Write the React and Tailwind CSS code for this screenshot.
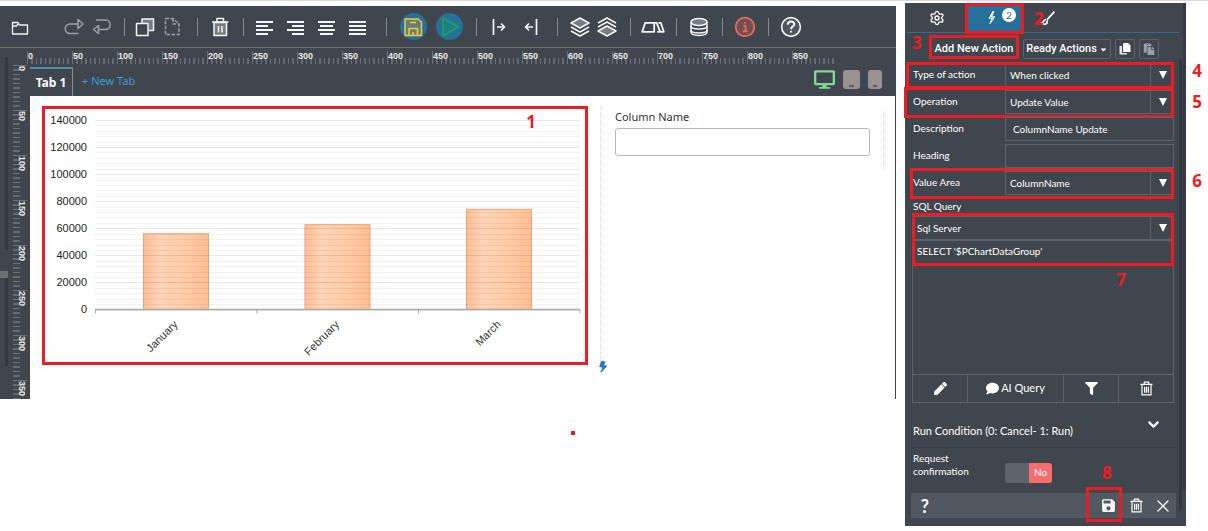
import React, { useState } from 'react';
import {
  FaDesktop,
  FaBolt,
  FaCaretDown,
  FaComment,
  FaFilter,
  FaPen,
  FaPaste
} from 'react-icons/fa';
import { MdSave } from 'react-icons/md';
import { Settings, X, ChevronDown } from 'lucide-react';

const Glyph = ({ size = 20, children, className = '' }) => (
  <svg
    width={size}
    height={size}
    viewBox="0 0 20 20"
    fill="none"
    stroke="currentColor"
    strokeWidth="1.5"
    strokeLinejoin="round"
    className={className}
  >
    {children}
  </svg>
);

// Toolbar drawings
const icons = {
  folder: <path d="M2.500 17V5.500h5.500l1.500 2.500h8v9zM2.500 9h4l1.500-2" strokeWidth="1.300" />,
  redo: <path d="M14.500 16.500H6a4.750 4.750 0 0 1 0-9.500h8M14 2.500v9l5-4.500z" />,
  undo: <path d="M4 3h9.500a4.750 4.750 0 0 1 0 9.500H6.500M6.500 8.500v8L1.500 12.500z" />,
  copy: (
    <>
      <path d="M7 6V2h11.500v11.500H14" fill="#777c82" />
      <path d="M1.500 6.500H13v12H1.500z" fill="#40464d" />
    </>
  ),
  page: <path d="M3.500 1.500H11l6 5.500v10.500H3.500zM11 1.500v5.500h6" strokeDasharray="3.500 1.500" />,
  trash: (
    <>
      <path d="M4 5.500h12.500v13H4z" fill="#777c82" />
      <path d="M2 5h16.500M7 4.500V1.500h6.500v3M8.500 9v6.500M12 9v6.500" />
    </>
  ),
  barIn: <path d="M4.500 2v16M8 10h7M12 6.500l3.500 3.500-3.500 3.500" strokeWidth="1.700" />,
  barOut: <path d="M15.500 2v16M12 10H5M8 6.500L4.500 10 8 13.500" strokeWidth="1.700" />,
  layers: (
    <>
      <path d="M10 1l9 5-9 5-9-5z" fill="#777c82" />
      <path d="M1 10l9 5 9-5M1 14l9 5 9-5" />
    </>
  ),
  layersUp: (
    <>
      <path d="M10 9l9 5-9 5-9-5z" fill="#777c82" />
      <path d="M1 10l9-5 9 5M1 6l9-5 9 5" />
    </>
  ),
  steps: <path d="M1 14L3.500 6.500H11V14zM11 6.500h2l3 7.500h-2.500M14.500 6.500h2L19 14h-3" />,
  database: (
    <>
      <path d="M2 5v10c0 4.500 16 4.500 16 0V5" />
      <path d="M2 9c0 4 16 4 16 0M2 13c0 4 16 4 16 0" />
      <ellipse cx="10" cy="5" rx="8" ry="3.500" fill="#777c82" />
    </>
  ),
  info: (
    <>
      <circle cx="10" cy="10" r="8.500" fill="#73504f" />
      <path d="M8.500 9h2v4.500M8 14h4.500M10 5.500v1.500" />
    </>
  ),
  help: (
    <>
      <circle cx="10" cy="10" r="8.500" fill="#51575e" />
      <path d="M7 8c0-4 6-4 6-.5 0 2-3 2-3 4.500M10 13.500v1.500" strokeWidth="1.800" />
    </>
  )
};

const alignLines = {
  left: [[1, 18], [1, 13], [1, 18], [1, 13]],
  right: [[1, 18], [6, 18], [1, 18], [6, 18]],
  center: [[1, 18], [3, 16], [1, 18], [3, 16]],
  justify: [[1, 18], [1, 18], [1, 18], [1, 18]]
};

const AlignIcon = ({ kind }) => (
  <Glyph>
    {alignLines[kind].map(([a, b], i) => (
      <path key={i} d={`M${a} ${5 + i * 4}H${b}`} strokeWidth="2" />
    ))}
  </Glyph>
);

const ToolButton = ({ label, className = 'w-[46px]', children }) => (
  <button aria-label={label} className={`flex h-full items-center justify-center ${className}`}>
    {children}
  </button>
);

const ToolGroup = ({ className = '', children }) => (
  <div className="flex h-full items-center">
    <span className="-mr-px h-[18px] w-px bg-[#858a8e]" />
    <div className={`flex h-full justify-center ${className}`}>{children}</div>
  </div>
);

const Toolbar = () => (
  <div className="flex h-[42px] items-center border-b border-[#6d6d68] text-gray-100">
    <div className="flex h-full w-[124px] shrink-0">
      <ToolButton label="Open" className="mr-5 w-10"><Glyph>{icons.folder}</Glyph></ToolButton>
      <ToolButton label="Redo" className="w-7 text-gray-400"><Glyph>{icons.redo}</Glyph></ToolButton>
      <ToolButton label="Undo" className="w-7 text-gray-400"><Glyph>{icons.undo}</Glyph></ToolButton>
    </div>
    <ToolGroup className="w-[73px] pr-1">
      <ToolButton label="Copy" className="w-[27px]"><Glyph>{icons.copy}</Glyph></ToolButton>
      <ToolButton label="New page" className="w-[27px] text-gray-400"><Glyph>{icons.page}</Glyph></ToolButton>
    </ToolGroup>
    <ToolGroup>
      <ToolButton label="Delete"><Glyph>{icons.trash}</Glyph></ToolButton>
    </ToolGroup>
    <ToolGroup className="w-[143px] pr-1.5">
      {Object.keys(alignLines).map((kind) => (
        <ToolButton key={kind} label={`Align ${kind}`} className="w-[31px]"><AlignIcon kind={kind} /></ToolButton>
      ))}
    </ToolGroup>
    <ToolGroup className="w-[90px]">
      <ToolButton label="Save" className="w-9">
        <span className="flex h-[27px] w-[27px] items-center justify-center rounded-full bg-[#26709a] text-[#f5c935]">
          <Glyph>
            <path d="M2 2h13l3.500 3v13.500H2z" fill="#647f7c" />
            <path d="M6 18.500v-7h8.500v7M7 5.500h6M10 15v3" />
          </Glyph>
        </span>
      </ToolButton>
      <ToolButton label="Run" className="w-9">
        <span className="flex h-[27px] w-[27px] items-center justify-center rounded-full bg-[#26709a] pl-1 text-[#17a85b]">
          <Glyph><path d="M2 1l15.500 9-15.500 9z" fill="#247b8a" /></Glyph>
        </span>
      </ToolButton>
    </ToolGroup>
    <ToolGroup className="w-[81px] pr-1">
      <ToolButton label="Indent" className="w-8"><Glyph>{icons.barIn}</Glyph></ToolButton>
      <ToolButton label="Outdent" className="w-8"><Glyph>{icons.barOut}</Glyph></ToolButton>
    </ToolGroup>
    <ToolGroup className="w-[73px]">
      <ToolButton label="Bring forward" className="w-[27px]"><Glyph>{icons.layers}</Glyph></ToolButton>
      <ToolButton label="Send backward" className="w-[27px]"><Glyph>{icons.layersUp}</Glyph></ToolButton>
    </ToolGroup>
    <ToolGroup>
      <ToolButton label="Steps"><Glyph size={24}>{icons.steps}</Glyph></ToolButton>
    </ToolGroup>
    <ToolGroup>
      <ToolButton label="Database"><Glyph>{icons.database}</Glyph></ToolButton>
    </ToolGroup>
    <ToolGroup>
      <ToolButton label="Info" className="w-[46px] text-[#f06a5a]"><Glyph size={22}>{icons.info}</Glyph></ToolButton>
    </ToolGroup>
    <ToolGroup>
      <ToolButton label="Help"><Glyph size={22}>{icons.help}</Glyph></ToolButton>
    </ToolGroup>
  </div>
);

const range = (n) => Array.from({ length: n }, (_, i) => i);

const TopRuler = () => (
  <svg width="830" height="17" className="block font-['Liberation_Sans'] text-[9px] font-bold">
    {range(180).map((i) => (
      <path key={i} d={`M${0.5 + i * 4.5} ${i % 10 ? 10 : 3}V16`} stroke={i % 2 ? '#8b8f93' : '#6d7277'} />
    ))}
    {range(18).map((i) => (
      <text key={i} x={1 + i * 45} y="11" fill="#e8e8e8">{i * 50}</text>
    ))}
  </svg>
);

const SideRuler = () => (
  <svg width="14" height="334" className="block font-['Liberation_Sans'] text-[9px] font-bold">
    {range(75).map((i) => (
      <path key={i} d={`M0 ${0.5 + i * 4.5}H${i % 10 ? 7 : 14}`} stroke={i % 2 ? '#8b8f93' : '#6d7277'} />
    ))}
    {range(8).map((i) => (
      <text key={i} transform={`translate(6 ${1 + i * 45}) rotate(90)`} fill="#e8e8e8">{i * 50}</text>
    ))}
  </svg>
);

// Red numbered frames drawn over the parts they explain
const Frame = ({ className }) => (
  <span className={`pointer-events-none absolute border-[3px] border-[#ed1c24] ${className}`} />
);

const Mark = ({ n, className }) => (
  <span className={`pointer-events-none absolute font-['Open_Sans',sans-serif] text-[17px] leading-5 font-bold text-[#ed1c24] ${className}`}>
    {n}
  </span>
);

const chartData = [
  { month: 'January', value: 56000 },
  { month: 'February', value: 62700 },
  { month: 'March', value: 74000 }
];

const Chart = () => {
  const y = (v) => 203.5 - (v / 140000) * 189.5;

  return (
    <svg viewBox="0 0 546 259" className="block w-full font-['Liberation_Sans'] text-[11px]">
      <defs>
        <linearGradient id="bar">
          <stop offset="0" stopColor="#ffbe94" />
          <stop offset="0.25" stopColor="#ffd3b6" />
          <stop offset="0.6" stopColor="#ffcda8" />
          <stop offset="1" stopColor="#ffbe94" />
        </linearGradient>
      </defs>
      {chartData.map((d, i) => (
        <rect
          key={d.month}
          x={101.5 + i * 161.5}
          y={y(d.value)}
          width="65"
          height={203.5 - y(d.value)}
          fill="url(#bar)"
          stroke="#eaa77c"
        />
      ))}
      {range(36).map((i) => (
        <path key={i} d={`M53 ${Math.round(y(i * 4000)) + 0.5}H538`} stroke="#000" strokeOpacity={i % 5 ? 0.05 : 0.09} />
      ))}
      {range(8).map((i) => (
        <text key={i} x="45" y={y(i * 20000) + 3.5} textAnchor="end" fill="#222">{i * 20000}</text>
      ))}
      <path d="M53 203.500H538" stroke="#aaa" strokeWidth="1.500" />
      {range(4).map((i) => (
        <path key={i} d={`M${53.5 + i * 161.5} 204v3.500`} stroke="#aaa" />
      ))}
      {chartData.map((d, i) => (
        <text key={d.month} transform={`translate(${136.5 + i * 161.5} 219) rotate(-45)`} textAnchor="end" fill="#333">
          {d.month}
        </text>
      ))}
    </svg>
  );
};

const Editor = () => (
  <div className="mt-[3px] min-w-0 flex-1 self-start bg-[#40464d]">
    <Toolbar />
    <div className="flex">
      <div className="flex w-[13px] shrink-0 flex-col pt-[9px]">
        <div className="ml-[5px] h-[193px] w-[3px] bg-[#33383f]" />
        <div className="mt-[21px] h-[7px] w-2 bg-[#6c6f70]" />
        <div className="ml-[5px] h-[88px] w-[3px] bg-[#33383f]" />
      </div>
      <div className="w-[14px] shrink-0 pt-[17px]"><SideRuler /></div>
      <div className="flex min-w-0 flex-1 flex-col">
        <div className="h-[17px] overflow-hidden"><TopRuler /></div>
        <div className="ml-[3px] flex h-[31px] items-end font-['Noto_Sans',sans-serif]">
          <button className="h-[29px] w-[43px] border-t-2 border-r border-t-[#4a8fae] border-r-[#85898d] text-[12px] leading-4 font-bold whitespace-nowrap text-white">Tab 1</button>
          <button className="ml-[9px] h-[29px] text-[11px] text-[#3d9bd4]">+ New Tab</button>
          <div className="mr-[14px] mb-1.5 ml-auto flex items-center gap-2">
            <button aria-label="Desktop" className="text-[#83d69b]"><FaDesktop size={21} /></button>
            <button aria-label="Tablet">
              <svg width="17" height="19" className="block"><rect width="17" height="19" rx="3" fill="#979291" /><path d="M6 16h5" stroke="#5f5f61" strokeWidth="2" /></svg>
            </button>
            <button aria-label="Phone">
              <svg width="14" height="19" className="block"><rect width="14" height="19" rx="3" fill="#979291" /><path d="M5 16h4" stroke="#5f5f61" strokeWidth="2" /></svg>
            </button>
          </div>
        </div>
        <div className="mr-px ml-[3px] flex flex-1 bg-white pt-2.5 pr-[11px] pl-3">
          <div className="relative min-w-0 flex-1 self-start">
            <Chart />
            <Frame className="inset-0" />
            <Mark n="1" className="top-1.5 right-[52px]" />
          </div>
          <div className="relative ml-3 h-[265px] w-[284px] border-l border-dotted border-gray-300">
            <div className="mt-1 h-[59px] border-r border-dotted border-gray-300 pr-[13px] pl-[14px]">
              <label htmlFor="column-name" className="block font-['Noto_Sans',sans-serif] text-[11px] leading-[14px] text-[#333]">Column Name</label>
              <input id="column-name" className="mt-1 block h-7 w-full rounded-[3px] border border-[#b8b8b8] px-2 text-xs" />
            </div>
            <FaBolt size={12} className="absolute -bottom-0.5 -left-1 rotate-12 text-[#2f79b5]" />
          </div>
        </div>
      </div>
    </div>
  </div>
);

const SelectBox = ({ id, options, label }) => (
  <div className="relative">
    <select id={id} aria-label={label} className="block h-6 w-full appearance-none border border-[#5d646c] bg-[#40464d] pl-1 text-[10px] text-white">
      {options.map((option) => (
        <option key={option}>{option}</option>
      ))}
    </select>
    <span className="pointer-events-none absolute top-0 right-0 flex h-6 w-6 items-center justify-center border-l border-[#5d646c] text-white">
      <svg width="8" height="8"><path d="M0 0h8L4 8z" fill="currentColor" /></svg>
    </span>
  </div>
);

const Row = ({ id, label, children }) => (
  <div className="relative grid h-[27px] grid-cols-[93px_1fr]">
    <label htmlFor={id} className="pt-1 pl-px leading-[14px]">{label}</label>
    {children}
  </div>
);

const TrashIcon = () => (
  <Glyph size={15}>
    <path d="M2 4.500h16M7 4V1.500h6V4M4 5v13.500h12V5M7.500 7.500v8M10 7.500v8M12.500 7.500v8" strokeWidth="1.600" />
  </Glyph>
);

const fieldClass = 'block h-6 w-full border border-[#5d646c] bg-transparent px-[7px] text-[10px] text-white';

const ActionPanel = () => {
  const [confirm, setConfirm] = useState(false);

  return (
    <aside className="flex w-[281px] shrink-0 bg-[#40464d] font-['Lato',sans-serif] text-[10px] text-white">
      <div className="min-w-0 flex-1">
        <div className="ml-0.5 flex h-[30px] border-b border-[#26709a]">
          <button aria-label="Settings" className="flex w-[60px] items-center justify-center"><Settings size={16} /></button>
          <button aria-label="Actions" className="relative flex w-[55px] items-center justify-center bg-[#26709a]">
            <Glyph size={15} className="mr-1.5"><path d="M12 2L7 11h4l-3 7 6-9h-4l3-7z" /></Glyph>
            <span className="absolute top-[5px] right-1.5 flex h-[14px] w-[14px] items-center justify-center rounded-full bg-white text-[10px] text-[#26709a]">2</span>
            <Frame className="-inset-x-0.5 top-0 -bottom-0.5" />
          </button>
          <button aria-label="Style" className="relative flex w-[52px] items-center justify-center">
            <Glyph size={16}><path d="M18 2L9 12M8 12c-3-1-3 4-6 4 3 3 8 2 7-3" strokeWidth="2" /></Glyph>
            <Mark n="2" className="top-1.5 left-3" />
          </button>
        </div>
        <div className="relative flex h-7 items-end gap-1 pb-0.5 pl-6 font-['Roboto',sans-serif] text-[11px] font-medium">
          <Mark n="3" className="top-0 left-[7px]" />
          <button className="relative h-5 w-[90px] whitespace-nowrap">
            Add New Action
            <Frame className="inset-x-0 -top-1 bottom-0" />
          </button>
          <button className="flex h-5 w-[88px] items-center justify-center rounded-xs border border-[#5d646c] whitespace-nowrap">
            Ready Actions<FaCaretDown size={9} className="ml-0.5" />
          </button>
          <button aria-label="Copy action" className="flex h-5 w-5 items-center justify-center rounded-xs border border-[#5d646c]">
            <svg width="12" height="12" viewBox="0 0 12 12" fill="currentColor">
              <path d="M5 0h4l2.500 2.500V9H4V1z" />
              <path d="M3 3H.5v8.500H8V10H3z" opacity="0.85" />
            </svg>
          </button>
          <button aria-label="Paste action" className="flex h-5 w-5 items-center justify-center rounded-xs border border-[#5d646c] text-gray-400"><FaPaste size={12} /></button>
        </div>

        <div className="pt-[2px] pr-[5px] pl-[7px]">
          <Row id="type" label="Type of action">
            <SelectBox id="type" options={['When clicked']} />
            <Frame className="-top-px right-0 bottom-[1px] -left-1.5" />
            <Mark n="4" className="-top-0.5 -right-7" />
          </Row>
          <Row id="operation" label="Operation">
            <SelectBox id="operation" options={['Update Value']} />
            <Frame className="-top-[3px] right-0 -bottom-px -left-2" />
            <Mark n="5" className="top-0.5 -right-7" />
          </Row>
          <Row id="description" label="Description">
            <input id="description" defaultValue="ColumnName Update" className={fieldClass} />
          </Row>
          <Row id="heading" label="Heading">
            <input id="heading" className={fieldClass} />
          </Row>
          <Row id="area" label="Value Area">
            <SelectBox id="area" options={['ColumnName']} />
            <Frame className="-top-[3px] right-0 -bottom-px -left-0.5" />
            <Mark n="6" className="top-0 -right-7" />
          </Row>
          <label htmlFor="query" className="block h-[18px] pl-px leading-4">SQL Query</label>
          <div className="relative">
            <SelectBox label="Connection" options={['Sql Server']} />
            <textarea
              id="query"
              defaultValue="SELECT '$PChartDataGroup'"
              className="block h-[135px] w-full resize-none border border-[#5d646c] px-1 py-[3px] text-[10px] leading-[14px]"
            />
            <Frame className="-top-[3px] right-0 left-0 h-[53px]" />
            <Mark n="7" className="top-[54px] right-12" />
          </div>
          <div className="grid h-7 grid-cols-[55px_1fr_55px_54px] divide-x divide-[#5d646c] border border-t-0 border-[#5d646c] text-[11px]">
            <button aria-label="Edit" className="flex items-center justify-center"><FaPen size={13} /></button>
            <button className="flex items-center justify-center gap-0.5"><FaComment size={13} />AI Query</button>
            <button aria-label="Filter" className="flex items-center justify-center"><FaFilter size={13} /></button>
            <button aria-label="Clear query" className="flex items-center justify-center"><TrashIcon /></button>
          </div>
          <button className="flex h-[45px] w-full items-end justify-between border-b border-[#3a4047] pr-3 pb-2 pl-px">
            <span className="text-[11px] leading-4">Run Condition (0: Cancel- 1: Run)</span>
            <ChevronDown size={17} strokeWidth={3} className="mb-1.5" />
          </button>
          <div className="grid h-[45px] grid-cols-[93px_1fr] pt-1 leading-[13px]">
            <label htmlFor="confirm" className="pl-px">Request<br />confirmation</label>
            <div className="relative mt-[11px] flex h-5 w-[47px] self-start overflow-hidden rounded-[3px] bg-[#5d646c]">
              <input
                id="confirm"
                type="checkbox"
                checked={confirm}
                onChange={() => setConfirm(!confirm)}
                className="absolute inset-0 h-full w-full appearance-none"
              />
              <span className={`pointer-events-none flex h-full w-[23px] items-center justify-center pb-0.5 text-white ${confirm ? 'bg-[#5cb85c]' : 'ml-auto bg-[#f56e6e]'}`}>
                {confirm ? 'Yes' : 'No'}
              </span>
            </div>
          </div>
        </div>
        <div className="mr-[3px] mb-2 ml-1.5 flex h-[25px] items-center bg-[#51585f]">
          <button aria-label="Help" className="w-7 text-[18px] leading-5 font-bold">?</button>
          <div className="ml-auto flex items-center">
            <button aria-label="Save action" className="relative flex h-[25px] w-7 items-center justify-center text-white">
              <MdSave size={17} />
              <Frame className="-top-1.5 right-0 -bottom-1 -left-2" />
              <Mark n="8" className="-top-[30px] left-2" />
            </button>
            <button aria-label="Delete action" className="flex w-7 items-center justify-center"><TrashIcon /></button>
            <button aria-label="Close" className="flex w-[26px] items-center justify-center"><X size={20} strokeWidth={1.5} /></button>
          </div>
        </div>
      </div>
      <div className="mt-14 mb-4 w-[3px] rounded-sm bg-[#33373f]" />
      <div className="mb-9 ml-px w-[3px] bg-[#353a44]" />
    </aside>
  );
};

export default function App() {
  return (
    <div className="relative flex gap-[9px] border-t border-[#d9d9d9] bg-white pt-[2px] pr-[22px]">
      <Editor />
      <ActionPanel />
      <span className="absolute top-[430px] left-[571px] h-1 w-1 bg-[#ed1c24]" />
    </div>
  );
}
